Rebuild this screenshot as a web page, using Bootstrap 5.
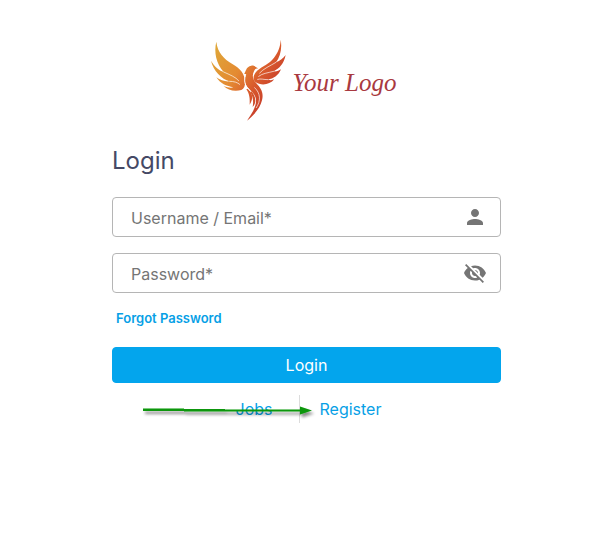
<!DOCTYPE html>
<html lang="en">
<head>
<meta charset="utf-8">
<meta name="viewport" content="width=device-width, initial-scale=1">
<title>Login</title>
<link href="https://cdn.jsdelivr.net/npm/bootstrap@5.3.0/dist/css/bootstrap.min.css" rel="stylesheet">
<style>
  body { font-family: Inter, "Liberation Sans", sans-serif; font-size: 16px; line-height: 24px; background: #fff; }
  .login-panel { max-width: 413px; padding: 38px 12px; }
  .brand-name { font: italic 25px/32px "Liberation Serif", serif; color: #a93940; padding: 4px 8px 0 0; }
  .brand-art { width: 80px; height: 86px; }
  .login-title { font-size: 24px; line-height: 32px; font-weight: 400; color: #454965; margin: 21px 0 20px; }
  .field-box { border: 1px solid #b5b5b5; border-radius: 4px; height: 40px; padding: 0 13px 0 18px; margin-bottom: 16px; color: #757575; }
  .field-box:focus-within { border-color: #03a5ed; }
  .field-box input { height: 38px; line-height: 24px; min-width: 0; padding: 2px 0 0; outline: 0; }
  .field-box input::placeholder { color: #757575; opacity: 1; }
  .icon-glyph { width: 24px; height: 24px; fill: currentColor; display: block; }
  .forgot { font-size: 13px; line-height: 20px; font-weight: 600; margin: -1px 4px 0; }
  .link-sky { color: #079fe6; text-decoration: none; }
  .btn-sky { --bs-btn-color: #fff; --bs-btn-bg: #03a5ed; --bs-btn-border-color: #03a5ed; --bs-btn-hover-color: #fff; --bs-btn-hover-bg: #0293d4; --bs-btn-hover-border-color: #0293d4; border-radius: 4px; padding: 5px 12px; margin-top: 19px; }
  .more-links { margin-top: 12px; }
  .more-links li { padding: 2px 22px 2px 20px; }
  .more-links li:first-child { padding: 2px 26px; border-right: 1px solid #dcdcdc; }
  .pointer-arrow { width: 184px; height: 20px; left: 30px; top: 7px; pointer-events: none; }
</style>
<script src="https://cdn.jsdelivr.net/npm/bootstrap@5.3.0/dist/js/bootstrap.bundle.min.js"></script>
</head>
<body>
<main class="login-panel mx-auto">
  <div class="d-flex justify-content-center align-items-center gap-1">
    <svg class="brand-art" viewBox="24 24 240 258" aria-hidden="true">
      <defs>
        <linearGradient id="flame" gradientUnits="userSpaceOnUse" x1="35" y1="60" x2="240" y2="200">
          <stop offset="0" stop-color="#dfa638"/><stop offset=".4" stop-color="#e48a32"/><stop offset=".65" stop-color="#d95b2d"/><stop offset="1" stop-color="#bf3029"/>
        </linearGradient>
      </defs>
      <g fill="url(#flame)">
        <path d="M46 35C50 68 68 86 94 102C118 115 131 132 132 154C133 168 129 177 121 180C101 185 80 181 68 168C80 173 90 174 97 172C77 169 57 160 46 142C58 151 74 156 86 154C62 147 37 123 30 92C40 109 54 121 68 126C46 101 38 66 46 35Z"/>
        <path d="M239 29C244 57 237 80 225 97C237 92 247 84 254 75C249 101 235 115 218 124C226 125 234 122 240 118C232 137 217 146 201 149C207 151 214 151 220 148C206 165 180 168 163 156C153 147 158 132 170 121C184 108 204 103 219 83C231 67 238 51 239 29Z"/>
        <path d="M129 131C134 128 134 109 151 107C160 106 162 110 172 115C164 115 161 118 159 124C152 137 156 149 166 160C179 174 189 188 183 211C178 233 160 255 138 272C154 249 166 230 165 209C163 192 152 185 141 173C129 160 129 144 136 133Z"/>
        <path d="M140 176C154 188 159 204 146 224C147 208 146 192 136 178Z"/>
        <path d="M151 184C164 198 168 218 155 231C158 215 156 199 148 187Z"/>
      </g>
      <g fill="none" stroke="#fff" stroke-width="2" stroke-linecap="round">
        <path d="M68 126C86 134 104 141 113 152"/>
        <path d="M86 154C99 154 109 157 116 163"/>
        <path d="M225 97C207 108 187 116 176 129"/>
        <path d="M218 124C199 129 184 130 173 139"/>
        <path d="M201 149C187 149 179 145 170 148"/>
        <path d="M161 173C179 190 180 212 166 233"/>
        <path d="M133 137C127 157 134 170 146 181" stroke-width="3"/>
      </g>
    </svg>
    <span class="brand-name">Your Logo</span>
  </div>

  <h1 class="login-title">Login</h1>

  <form>
    <div class="field-box d-flex align-items-center">
      <label class="visually-hidden" for="user">Username / Email</label>
      <input class="border-0 bg-transparent flex-grow-1" id="user" type="text" placeholder="Username / Email*" required>
      <svg class="icon-glyph" viewBox="0 0 24 24" aria-hidden="true"><path d="M12 12c2.210 0 4-1.790 4-4s-1.790-4-4-4-4 1.790-4 4 1.790 4 4 4zm0 2c-2.670 0-8 1.340-8 4v2h16v-2c0-2.660-5.330-4-8-4z"/></svg>
    </div>
    <div class="field-box d-flex align-items-center">
      <label class="visually-hidden" for="pass">Password</label>
      <input class="border-0 bg-transparent flex-grow-1" id="pass" type="password" placeholder="Password*" required>
      <button class="border-0 bg-transparent p-0 text-reset" type="button" aria-label="Show password">
        <svg class="icon-glyph" viewBox="0 0 24 24" aria-hidden="true"><path d="M12 7c2.760 0 5 2.240 5 5 0 .65-.13 1.260-.36 1.830l2.920 2.920c1.510-1.260 2.700-2.890 3.430-4.750-1.730-4.390-6-7.500-11-7.500-1.400 0-2.740.25-3.980.7l2.160 2.160C10.740 7.130 11.350 7 12 7zM2 4.270l2.280 2.280.46.46C3.080 8.300 1.780 10.020 1 12c1.730 4.390 6 7.500 11 7.500 1.550 0 3.030-.3 4.380-.84l.42.42L19.730 22 21 20.730 3.270 3 2 4.270zM7.530 9.800l1.550 1.550c-.05.21-.08.43-.08.65 0 1.660 1.340 3 3 3 .22 0 .44-.03.65-.08l1.550 1.550c-.67.33-1.410.53-2.200.53-2.760 0-5-2.240-5-5 0-.79.2-1.530.53-2.200zm4.310-.78l3.150 3.150.02-.16c0-1.660-1.340-3-3-3l-.17.01z"/></svg>
      </button>
    </div>
    <div class="forgot"><a class="link-sky" href="#">Forgot Password</a></div>
    <button class="btn btn-sky w-100" type="submit">Login</button>
  </form>

  <div class="position-relative more-links">
    <ul class="list-unstyled d-flex justify-content-center mb-0">
      <li><a class="link-sky" href="#">Jobs</a></li>
      <li><a class="link-sky" href="#">Register</a></li>
    </ul>
    <svg class="pointer-arrow position-absolute" viewBox="0 0 184 20" aria-hidden="true">
      <defs><filter id="soft" x="-5%" y="-50%" width="115%" height="250%"><feDropShadow dx="2" dy="3" stdDeviation="1.500" flood-color="#000" flood-opacity=".45"/></filter></defs>
      <g fill="#0a960a" filter="url(#soft)"><path d="M1 6.500H42V7H83V7.500H159V9.500H42V9H1Z"/><path d="M158 4.500L170 8.500L158 12.500Z"/></g>
    </svg>
  </div>
</main>
</body>
</html>
